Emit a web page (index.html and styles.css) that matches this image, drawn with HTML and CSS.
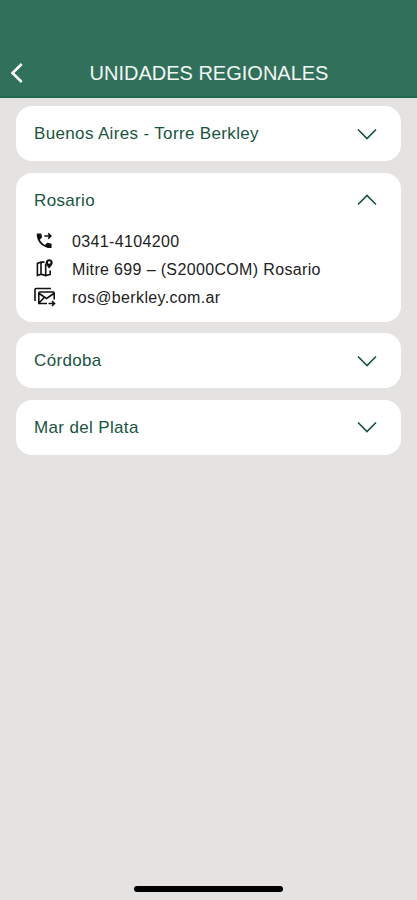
FILE: index.html
```html
<!DOCTYPE html>
<html lang="es">
<head>
    <meta charset="UTF-8">
    <meta name="viewport" content="width=device-width, initial-scale=1.0">
    <title>Unidades Regionales</title>
    <link rel="stylesheet" href="styles.css">
</head>
<body>
    <header class="header">
        <svg class="back" viewBox="0 0 16 24"><path d="M12.7 3 3.5 12l9.2 9"/></svg>
        <h1 class="title">UNIDADES REGIONALES</h1>
    </header>

    <main class="list">
        <section class="card">
            <div class="card-header">
                <h2>Buenos Aires - Torre Berkley</h2>
                <svg class="chevron" viewBox="0 0 20 12"><path d="m1 1.5 9 9 9-9"/></svg>
            </div>
        </section>

        <section class="card">
            <div class="card-header">
                <h2>Rosario</h2>
                <svg class="chevron" viewBox="0 0 20 12"><path d="m1 10.500 9-9 9 9"/></svg>
            </div>
            <ul class="details">
                <li>
                    <!-- Phone -->
                    <svg class="icon" viewBox="0 0 22 22">
                        <path class="solid" d="M3.600 3.500h3c.5 0 .8.3.9.8l.5 2.700c0 .3-.1.6-.3.8L5.800 9.700c1.200 2.300 2.900 4 5.200 5.200l2-1.900c.2-.2.5-.3.8-.2l3 .6c.5.1.8.4.8.9v2.900c0 .5-.4.9-.9.9C9.300 18.100 2.700 11.900 2.700 4.400c0-.5.4-.9.9-.9z"/>
                        <path class="line" d="M10.300 6h6.200M14.200 3.400 16.800 6l-2.600 2.600"/>
                    </svg>
                    <span>0341-4104200</span>
                </li>
                <li>
                    <!-- Map with pin -->
                    <svg class="icon" viewBox="0 0 22 22">
                        <path class="line" d="M10.500 4.100H7L3.400 5.400v12L7 16.200l4.700 1.400 4.500-1.200v-4M7 4.100v12.100M11.700 5.500v12.100"/>
                        <path class="solid" fill-rule="evenodd" d="M15.200 1.200c-2 0-3.500 1.500-3.500 3.400 0 2.300 3.500 6 3.500 6s3.500-3.700 3.500-6c0-1.900-1.500-3.400-3.500-3.400zm0 2a1.300 1.300 0 1 1 0 2.600 1.300 1.300 0 0 1 0-2.600z"/>
                    </svg>
                    <span>Mitre 699 – (S2000COM) Rosario</span>
                </li>
                <li>
                    <!-- Stacked envelopes with arrow -->
                    <svg class="icon" viewBox="0 0 22 22">
                        <path class="line" d="M1 15V3.500c0-.6.4-1 1-1h15"/>
                        <path class="line" d="M13 17.500H4.800V7c0-.6.400-1 1-1h13.400c.6 0 1 .4 1 1v6.500M5.200 7.500l7.300 5 7.300-5M5 17l5-5.200"/>
                        <path class="line" d="M14.500 17.500h6M18 15l2.500 2.500L18 20"/>
                    </svg>
                    <span>ros@berkley.com.ar</span>
                </li>
            </ul>
        </section>

        <section class="card">
            <div class="card-header">
                <h2>Córdoba</h2>
                <svg class="chevron" viewBox="0 0 20 12"><path d="m1 1.5 9 9 9-9"/></svg>
            </div>
        </section>

        <section class="card">
            <div class="card-header">
                <h2>Mar del Plata</h2>
                <svg class="chevron" viewBox="0 0 20 12"><path d="m1 1.5 9 9 9-9"/></svg>
            </div>
        </section>
    </main>

    <div class="home-indicator"></div>
</body>
</html>
```

FILE: styles.css
```css
* {
    box-sizing: border-box;
}

body {
    display: flex;
    flex-direction: column;
    min-height: 900px;
    margin: 0;
    background-color: #e4e3e1;
    font-family: "Liberation Sans", Arial, sans-serif;
}

.header {
    display: grid;
    grid-template-columns: 32px 1fr 31px;
    align-items: center;
    height: 98px;
    padding-top: 50px;
    background-color: #31715b;
    border-bottom: 2px solid #1d684f;
}

.back {
    width: 16px;
    height: 24px;
    margin-left: 9px;
    fill: none;
    stroke: #fff;
    stroke-width: 2.6;
}

.title {
    margin: 0;
    color: #f2f7f4;
    font-size: 20px;
    font-weight: normal;
    line-height: 24px;
    text-align: center;
}

.list {
    display: flex;
    flex-direction: column;
    gap: 11.5px;
    padding: 8px 16px;
}

.card {
    background-color: #fff;
    border-radius: 16px;
}

.card-header {
    display: flex;
    align-items: center;
    justify-content: space-between;
    height: 55px;
    padding: 0 24px 0 18px;
}

.card-header h2 {
    margin: 0;
    padding-top: 1px;
    color: #195540;
    font-size: 17px;
    font-weight: normal;
    letter-spacing: 0.35px;
}

.chevron {
    width: 20px;
    height: 12px;
    fill: none;
    stroke: #195540;
    stroke-width: 1.7;
}

.details {
    margin: 0;
    padding: 0 18px 11px;
    list-style: none;
}

.details li {
    display: flex;
    align-items: center;
    gap: 16px;
    height: 27.7px;
    color: #222;
    font-size: 16px;
    letter-spacing: 0.35px;
}

.details span {
    padding-top: 2px;
}

.icon {
    width: 22px;
    height: 22px;
}

.icon .solid {
    fill: #111;
}

.icon .line {
    fill: none;
    stroke: #111;
    stroke-width: 1.6;
}

.home-indicator {
    width: 149px;
    height: 6px;
    margin: auto auto 8px;
    border-radius: 3px;
    background-color: #000;
}
```
